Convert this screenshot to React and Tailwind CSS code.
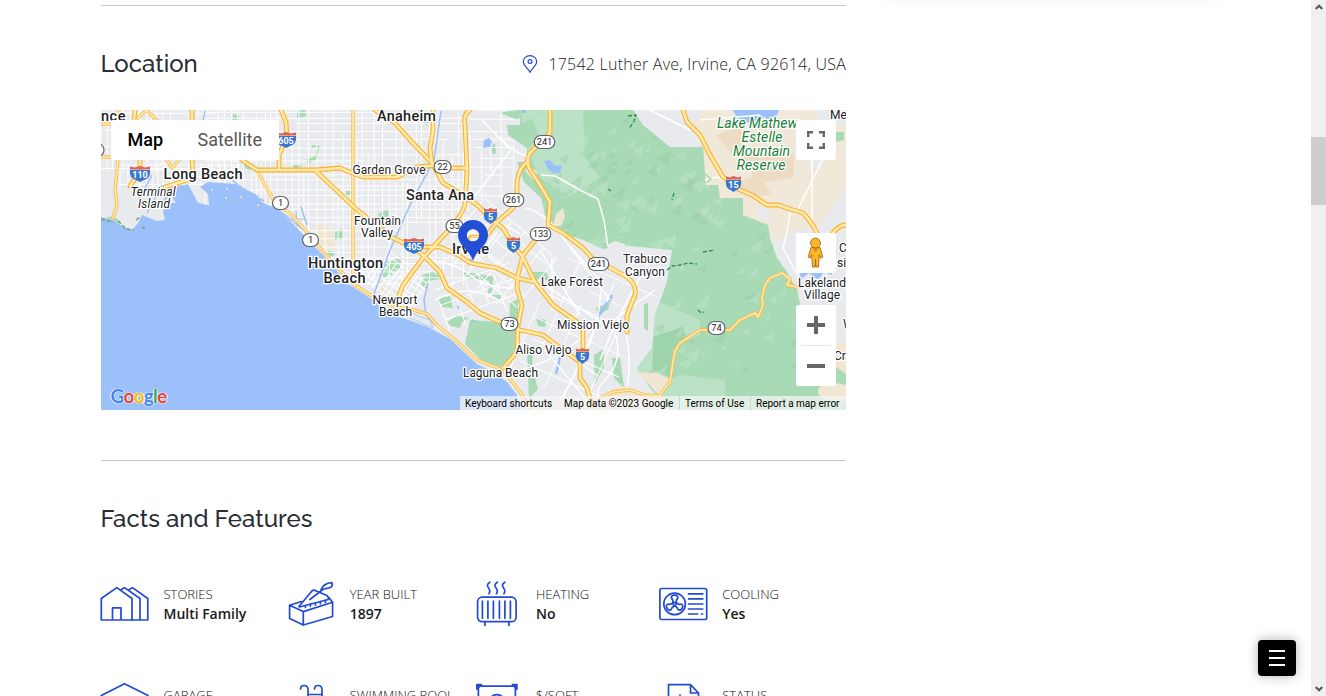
import React from "react";

/* ---------- map data ---------- */
const rng = (seed) => () => {
  seed = (seed * 1664525 + 1013904223) % 4294967296;
  return seed / 4294967296;
};

const LAND =
  "M101 110H846V410H520L517 395 507 382 493 372 477 364 464 352 450 339 430 328 412 321 393 315 370 298 350 285 322 254 298 229 280 210 262 202 257 195 236 184 208 182 200 187 208 194 209 205 198 203 188 184 178 186 167 190 176 203 168 203 163 211 165 220 157 221 142 215 138 223 132 230 123 227 115 221 101 217Z";

const FOREST =
  "M520 110H633L643 125 670 147H703L706 185H718L720 198H743V215L768 225 770 238 777 258 787 272 797 290 810 350 846 368V410H670L650 388 637 368 652 348 655 315 667 282 672 250 620 245 603 249 583 240 563 233 547 222 541 198 524 182 517 162H527V148L508 135 507 125 520 125Z";

const majorRoads = [
  "M375 110L395 123 410 140 432 163 443 183 460 193 477 205 490 218 503 228 513 245 522 256 535 282 553 305 577 322 583 328V352L580 362V378L587 388 593 410",
  "M281 110L286 122 287 137 279 155V170",
  "M242 160L257 170H315L355 208 370 220 393 238 413 247H440L460 256 470 263 497 268 517 278 535 282",
  "M315 170L340 168 352 173 363 177H397L417 167 440 165 453 168H466",
  "M470 110Q463 114 465 125L467 172 465 202Q466 210 447 232L423 258 403 285 398 298",
  "M433 110V132L430 148 432 163",
  "M550 110V133L530 153Q524 163 533 174L540 185 550 202 548 225 563 233 583 248 592 258 600 262 627 277Q637 285 635 295L627 315V332",
  "M526 163Q519 168 517 182V195L513 208 497 222 487 235 473 242",
  "M537 238L523 255 518 275 517 288 522 305 518 325 517 352 503 368",
  "M413 247L423 255 440 272 447 288 467 302 480 313 500 322 520 330 543 335 563 350 580 362",
  "M683 110L687 122 700 135 710 155 723 177 740 190 752 195 767 205H778L787 208 803 213Q811 221 817 233",
  "M833 233Q839 225 846 225",
  "M135 110L133 130 140 155V172L130 186",
  "M192 110V160L193 172 188 180 165 187",
];

const minorRoads = [
  "M257 170L265 185 275 202 292 215 312 238 325 254 352 283 370 295 395 307 410 309 427 314 437 325 455 340 477 360 503 370 520 392 530 408",
  "M660 395L670 382 673 362Q674 350 680 343L700 330H730L740 320 755 313 758 317 763 305 762 298 765 285 770 278 782 273 790 279 787 285 797 287",
  "M600 398L613 392 630 390 645 395 660 396",
  "M353 110V283",
  "M119 110L113 128 118 160 115 190 117 205 113 218",
  "M101 157H145",
  "M147 110L160 124",
  "M167 160L172 168 179 160",
  "M101 124H130 L147 110",
];

const whiteRoads = [
  "M541 175L555 176 580 190 598 199 604 220 608 247 M500 137L511 149 526 156 M466 207L510 151 M490 217L520 234 M478 246L520 285 M497 232L470 268 M525 208Q547 212 567 243L600 280 M482 120L511 150",
  "M424 260Q455 262 470 275T512 288 M435 300Q475 280 505 305 M540 282L604 324 M552 258V310 M535 330L598 376 M560 400Q605 330 600 282 M520 370Q560 360 590 330 M600 360Q620 310 650 260 M600 330L655 290 M614 330Q625 360 605 380T620 408 M625 330Q632 355 627 390",
  "M540 250L580 315 M570 247L610 300 M545 350L585 398 M650 110L690 130 M705 180L718 177 733 187 M700 120L760 115 M790 212L787 232 783 248 800 280 M795 215L825 155 M812 160V220",
];

const creeks = [
  "M441 111L434 160 410 205 390 250 374 294 M205 111L195 160 M152 175L139 199 M162 185L147 213 M179 184L158 207 M232 180L249 193 264 201 M301 207L307 225 M283 213L306 232 M428 283L424 300 426 315 M423 312L435 325",
  "M607 302L600 315 M612 295L609 302 M560 357L556 374",
];

/* Street grids: rectangles of parallel lines, turned about their centre. */
function gridPath(x0, y0, x1, y1, seed, min, max) {
  const r = rng(seed);
  let d = "";
  for (let x = x0; x < x1; x += min + r() * (max - min)) {
    const a = r() < 0.45 ? r() * (y1 - y0) * 0.5 : 0;
    const b = r() < 0.45 ? r() * (y1 - y0) * 0.4 : 0;
    d += `M${x.toFixed(1)} ${(y0 + a).toFixed(1)}V${(y1 - b).toFixed(1)}`;
  }
  for (let y = y0; y < y1; y += min + r() * (max - min)) {
    const a = r() < 0.45 ? r() * (x1 - x0) * 0.5 : 0;
    const b = r() < 0.45 ? r() * (x1 - x0) * 0.4 : 0;
    d += `M${(x0 + a).toFixed(1)} ${y.toFixed(1)}H${(x1 - b).toFixed(1)}`;
  }
  return d;
}

const grids = [
  { d: gridPath(205, 108, 470, 285, 7, 4, 9), t: undefined },
  { d: gridPath(101, 108, 215, 172, 21, 4, 10), t: undefined },
  { d: gridPath(120, 165, 240, 188, 11, 5, 9), t: undefined },
  { d: gridPath(470, 110, 515, 200, 3, 7, 13), t: undefined },
  { d: gridPath(450, 220, 545, 295, 31, 9, 17), t: "rotate(40 497 257)" },
  { d: gridPath(370, 262, 425, 302, 13, 4, 7), t: "rotate(35 398 282)" },
  { d: gridPath(530, 270, 635, 400, 17, 16, 30), t: "rotate(24 582 335)" },
  { d: gridPath(440, 275, 520, 320, 23, 12, 22), t: "rotate(-20 480 297)" },
];

function facets(count, seed) {
  const r = rng(seed);
  let d = "";
  for (let i = 0; i < count; i++) {
    const x = 515 + r() * 300;
    const y = 112 + r() * 265;
    const l = 5 + r() * 11;
    d += `M${x.toFixed(1)} ${y.toFixed(1)}l${l.toFixed(1)} ${(-l * (0.4 + r() * 0.6)).toFixed(1)} ${(-l * 0.25).toFixed(1)} ${(l * (0.8 + r() * 0.3)).toFixed(1)}Z`;
  }
  return d;
}
const lightFacets = facets(120, 5);
const darkFacets = facets(80, 99);

const parks =
  "M297 112l8-3 1 7-9 3Z M233 114l6 1v5h-7Z M306 160l9-4 2-9-6 1 1-3 8 1-3 13-9 5Z M294 165l8 0-3 4-8 0Z M346 191h5v4h-5Z M335 231l8-2v10l-8 1Z M329 250l6 4-3 3-5-3Z M378 214l10-5 1 8-10 1Z M428 145l4-2v10l-4 1Z M491 146l4-3 1 10-4 1Z M422 120l9-5 2 5-7 6Z M382 263l20-5-2 10-9 7-8 3Z M423 275l13-5 4 9-11 2-3 8-5-5Z M437 299l13-3 3 12-10-1Z M447 322l10-6 12 2-7 4-2 6-9-2Z M463 272l17 2 13 3-1 15-4 2 1-13-22-3Z M491 295l12 0-4 7Z M510 303l8-4v35l-9-4Z M531 272l15 0 4 10-9-4-6 5Z M536 318l10 2-1 7-7-1Z M527 352l6-1-1 16 6 22-9 10Z M596 308l14-6-2 8-10 4Z M470 320L497 322 517 332V352L500 367 483 362 465 344Z M594 355l10-6v18l-9 17Z M612 358l8 0 4 30-10-10Z M644 304l4-1v28l-4-3Z M500 113l28-6-2 9-10 3-6-2Z M101 219l12-3 8 6-5 3Z M243 163l8 2 2 6-8-3Z";

const waters =
  "M544 161l6-1 4 5 8 1-2 7-11-2Z M484 140l5-2 3 4-2 5-7 1Z M521 109h6l-2 4-4 0Z M733 110h46l-5 13-10-6-12 7-14-4Z M748 192l7 1-1 4-6-2Z M799 268h33v7l-8-3-6 8-9-7-8 6Z M457 305l3 2-2 3Z M471 258l2 4-6 1Z M589 277l3-2 1 3-4 2Z M472 319l4 2-4 1Z M597 313l5-4-3 10Z";

/* ---------- map pieces ---------- */
function T({ x, y, w, s = 12, big, children, anchor = "middle", green, italic }) {
  return (
    <text
      x={x}
      y={y}
      textAnchor={anchor}
      fontFamily="Roboto, 'Liberation Sans', sans-serif"
      fontSize={big ? 14.5 : s}
      fontWeight={big ? 500 : 400}
      fontStyle={italic ? "italic" : "normal"}
      fill={green ? "#188038" : "#202124"}
      stroke="#ffffff"
      strokeWidth="2.6"
      strokeLinejoin="round"
      paintOrder="stroke"
      textLength={w}
    >
      {children}
    </text>
  );
}

function Route({ x, y, n }) {
  const w = n.length === 1 ? 16 : n.length === 2 ? 17 : 20.5;
  return (
    <g>
      <rect x={x - w / 2} y={y - 6.5} width={w} height="13" rx="6.5" fill="#fff" stroke="#5f6368" strokeWidth="1.2" />
      <text x={x} y={y + 3.3} textAnchor="middle" fontSize="9.3" fontFamily="Roboto, sans-serif" fill="#202124">
        {n}
      </text>
    </g>
  );
}

function Interstate({ x, y, n }) {
  const w = n.length === 1 ? 6.5 : n.length === 2 ? 7.5 : 10;
  return (
    <g transform={`translate(${x} ${y})`}>
      <path d={`M${-w} -4H${w}Q${w + 1} 4 ${w * 0.4} 6L0 8 ${-w * 0.4} 6Q${-w - 1} 4 ${-w} -4Z`} fill="#3b78cc" />
      <path d={`M${-w} -7.5L${-w * 0.5} -6.5 0 -8 ${w * 0.5} -6.5 ${w} -7.5V-4.6H${-w}Z`} fill="#dd6258" />
      <text x="0" y="4.2" textAnchor="middle" fontSize="9" fontWeight="700" fontFamily="Roboto, sans-serif" fill="#fff">
        {n}
      </text>
    </g>
  );
}

function MapArt() {
  return (
    <svg viewBox="101 110 745 300" width="745" height="300" className="block">
      <defs>
        <clipPath id="land"><path d={LAND} /></clipPath>
        <clipPath id="forest"><path d={FOREST} /></clipPath>
      </defs>
      <rect x="101" y="110" width="745" height="300" fill="#9cc0fa" />
      <path d={LAND} fill="#e8eaed" />
      <g clipPath="url(#land)">
        <path d="M703 110H846V260L800 250 770 238 743 215 718 198 704 185 702 147 690 130Z" fill="#f0e8d8" />
        <path d="M650 110H683L700 140 704 150H670L643 127 634 110Z" fill="#e8eaed" />
        <path d="M716 135l18-8 12 3-6 19 20 5 6-4 28 4v23l-30 5 8 13-20 2-16-14 16-6 0-15-20-8Z" fill="#eddcc3" />
        <path d="M815 110h31v14l-10 3v20l-22 12Z M757 205l12 4 1 15-13-7Z M780 240l18-10 20-2 28-40v90h-50Z M810 160h12v8h-12Z" fill="#e8eaed" />
        <path d="M313 225l12 0 8 9 2 10-7 7-8-9Z M378 280h9v14l-6-2Z M260 196l14 3 0 9-13-6Z" fill="#f0e6d2" />
        <path d={parks} fill="#a8dab5" />
        <g fill="none" stroke="#fff" strokeWidth=".95">
          {grids.map((g, i) => (
            <path key={i} d={g.d} transform={g.t} />
          ))}
        </g>
        <path d={FOREST} fill="#a8dab5" />
        <g clipPath="url(#forest)">
          <path d="M520 110H583L585 158 600 178 570 196 540 178 528 150Z M655 300L700 320V335L680 343 668 380 680 375 725 380V410H665L650 385 637 367 650 348Z" fill="#bbe2c6" />
          <path d="M654 336l29-8 4 8-14 14-1 28-20-9Z" fill="#9dd4ac" />
          <path d="M520 125l-12 0 1 10 19 13 12-10-8-20Z" fill="#a8dab5" />
          <path d={darkFacets} fill="#9bcbaa" opacity=".42" />
          <path d={lightFacets} fill="#c1e6ca" opacity=".5" />
        </g>
        <path d="M637 372l20 1 12 6-9 17-15-2-15-8-18 2-12 12v10h46l18-10Z" fill="#f0e6d2" />
        <path d="M832 344h14v30l-14-10Z M818 390q3-9 18-7l10 2v16q-28 2-28-11Z M556 214l7-6 2 9-4 9-8 0Z M528 166l10 6-5 8-8-9Z" fill="#f0e6d2" />
        <path d="M607 245l8-4 10 3-2 12-10 5Z" fill="#e8eaed" />
        <path d={waters} fill="#9cc0fa" />
        <path d="M836 132h8v8l-8 2Z" fill="#a8dab5" />
        <g fill="none" stroke="#9cc0fa" strokeWidth="1.5">
          <path d={creeks[0]} />
          <path d={creeks[1]} strokeWidth="2.5" />
          <path d="M283 208l20 18 M296 211l1 15 M289 219h16" strokeWidth="1.2" />
        </g>
        <g fill="none" stroke="#fff" strokeWidth="1.5" strokeLinejoin="round">
          {whiteRoads.map((d, i) => (
            <path key={i} d={d} />
          ))}
        </g>
        <path d="M628 116l8-1-2 6-5 8M608 189l3 2M674 193l-2 7M667 270l5-4 9-1 7-2 9 1M698 310l3 3 3-1M703 252l12-2" fill="none" stroke="#2e8b57" strokeWidth="1.3" strokeDasharray="4 2" />
        <path d="M705 174l6 5-4 3" fill="none" stroke="#a8dab5" strokeWidth="1.6" />
        <g fill="none" strokeLinejoin="round" strokeLinecap="round">
          {minorRoads.map((d, i) => (
            <path key={i} d={d} stroke="#f8bd4c" strokeWidth="3.4" />
          ))}
          {minorRoads.map((d, i) => (
            <path key={i} d={d} stroke="#ffe9ac" strokeWidth="1.7" />
          ))}
          {majorRoads.map((d, i) => (
            <path key={i} d={d} stroke="#f9b22c" strokeWidth="4.8" />
          ))}
          {majorRoads.map((d, i) => (
            <path key={i} d={d} stroke="#ffe9ac" strokeWidth="2.6" />
          ))}
        </g>
      </g>
      <path d="M403 308l15 8 12 4 3 8-14-6-16-8Z" fill="#e8eaed" stroke="#9cc0fa" strokeWidth=".8" />
      <path d="M101 219l12 3M118 221l8 8 8 1M136 220l4-3M142 227l3 2" stroke="#5eaa72" strokeWidth="1.5" strokeDasharray="4 2" fill="none" />
      <path d="M211 190h2M226 189h2M225 198h2M240 197h2M257 205h2" stroke="#e3ddc7" strokeWidth="2" />

      <g transform="translate(.5 0)">
        <Route x={544} y={142} n="241" />
        <Route x={442} y={167} n="22" />
        <Route x={513} y={200} n="261" />
        <Route x={454} y={226} n="55" />
        <Route x={540} y={234} n="133" />
        <Route x={598} y={264} n="241" />
        <Route x={509} y={324} n="73" />
        <Route x={716} y={328} n="74" />
        <Route x={280} y={203} n="1" />
        <Route x={310} y={240} n="1" />
        <rect x="87.500" y="143.500" width="16" height="13" rx="6.500" fill="#fff" stroke="#5f6368" strokeWidth="1.2" />
        <Interstate x={139.500} y={174} n="110" />
        <Interstate x={285.500} y={140} n="605" />
        <Interstate x={413.500} y={246} n="405" />
        <Interstate x={490} y={216} n="5" />
        <Interstate x={513} y={245} n="5" />
        <Interstate x={582} y={356} n="5" />
        <Interstate x={733} y={184} n="15" />

        <T x={100.500} y={121} w={24.500} big anchor="start">nce</T>
        <T x={406} y={121.200} w={59} big>Anaheim</T>
        <T x={202.500} y={179.200} w={79} big>Long Beach</T>
        <T x={439.500} y={200.200} w={68} big>Santa Ana</T>
        <T x={345} y={268.200} w={75} big>Huntington</T>
        <T x={344} y={283.200} w={42} big>Beach</T>
        <T x={470} y={254.200} w={37} big>Irvine</T>
        <T x={388.500} y={174.300} w={73}>Garden Grove</T>
        <T x={377} y={225.300} w={47}>Fountain</T>
        <T x={376.500} y={237.300} w={32}>Valley</T>
        <T x={394.500} y={304.300} w={45}>Newport</T>
        <T x={395} y={316.300} w={33}>Beach</T>
        <T x={571.500} y={286.300} w={62}>Lake Forest</T>
        <T x={592.500} y={329.300} w={72}>Mission Viejo</T>
        <T x={543} y={354.300} w={56}>Aliso Viejo</T>
        <T x={500} y={377.300} w={75}>Laguna Beach</T>
        <T x={644.500} y={263.300} w={44}>Trabuco</T>
        <T x={644.500} y={276.300} w={40}>Canyon</T>
        <T x={821.500} y={287.300} w={48}>Lakeland</T>
        <T x={821.500} y={299.300} w={36}>Village</T>
        <T x={152.500} y={196.300} w={45} italic>Terminal</T>
        <T x={153.500} y={208.300} w={32} italic>Island</T>
        <T x={716.500} y={128.300} s={14} italic green anchor="start">Lake Mathew</T>
        <T x={761.500} y={142.300} w={41} s={14} italic green>Estelle</T>
        <T x={761} y={156.300} w={57} s={14} italic green>Mountain</T>
        <T x={760.500} y={170.300} w={49} s={14} italic green>Reserve</T>
        <T x={829.500} y={119.300} anchor="start">Me</T>
        <T x={838.500} y={252.300} anchor="start">C</T>
        <T x={836.500} y={267.300} anchor="start">si</T>
        <T x={842.500} y={328.300} anchor="start">W</T>
        <T x={833.500} y={360.300} anchor="start">Cr</T>
      </g>

      <path d="M473 261C470 250 458 246 458 235a15 15 0 0 1 30 0C488 246 476 250 473 261Z" fill="#234fd6" />
      <circle cx="473" cy="235.200" r="6.300" fill="#f4f5f6" />
      <path d="M468.500 240Q469.500 236 473 236.300L479 236" stroke="#f9b22c" strokeWidth="3" fill="none" />
      <path d="M469.500 240.500Q470.500 236.500 473 236.600L479 236.200" stroke="#ffe9ac" strokeWidth="1.2" fill="none" />
      <circle cx="473" cy="235.200" r="7.300" fill="none" stroke="#234fd6" strokeWidth="2" />
    </svg>
  );
}

function GoogleMark() {
  const letters = [
    ["G", "text-[#4285f4]"],
    ["o", "text-[#ea4335]"],
    ["o", "text-[#fbbc05]"],
    ["g", "text-[#4285f4]"],
    ["l", "text-[#34a853]"],
    ["e", "text-[#ea4335]"],
  ];
  return (
    <div className="absolute left-[9.5px] bottom-[3px] flex font-[Lato,sans-serif] text-[19px] leading-[22px] font-bold tracking-[-0.8px] [text-shadow:0_0_1px_#fff,0_0_2px_#fff,1px_0_0_#ffffff99,-1px_0_0_#ffffff99]">
      {letters.map(([c, k], i) => (
        <span key={i} className={k}>{c}</span>
      ))}
    </div>
  );
}

function MapView() {
  return (
    <div className="relative h-[300px] w-[745px] overflow-hidden font-[Roboto,sans-serif]">
      <MapArt />
      <div className="absolute left-[10px] top-[10px] flex h-10 w-[168px] items-center rounded-xs bg-white text-lg">
        <span className="w-[69px] pl-[16.5px] font-medium text-black">Map</span>
        <span className="pl-[17.5px] text-[#565656]">Satellite</span>
      </div>
      <div className="absolute right-[10px] top-[10px] flex size-10 items-center justify-center rounded-xs bg-white">
        <svg width="18" height="18" viewBox="0 0 18 18" fill="none" stroke="#666" strokeWidth="2.4">
          <path d="M1.200 6V1.200H6M12 1.200h4.800V6M16.800 12v4.800H12M6 16.800H1.200V12" />
        </svg>
      </div>
      <div className="absolute right-[10px] top-[123px] flex size-10 items-center justify-center rounded-xs bg-white">
        <svg width="20" height="32" viewBox="0 0 20 32" stroke="#a36a12" strokeWidth=".9" fill="#fbb829">
          <path d="M5 10.500h9l2.800 9.500-2 1.200-1.500-3.500-.8 12.300H9.900L9.500 22l-.4 8H6.500l-.8-12.300L4.200 21.200l-2-1.200Z" />
          <path d="M6.500 11h6l-3 4.500Z" fill="#e8851c" stroke="none" />
          <circle cx="9.500" cy="6" r="4.900" />
        </svg>
      </div>
      <div className="absolute right-[10px] top-[195px] flex h-[81px] w-10 flex-col items-center rounded-xs bg-white">
        <div className="flex h-10 items-center">
          <svg width="18" height="18" viewBox="0 0 18 18" fill="#666"><path d="M7 0h4v7h7v4h-7v7H7v-7H0V7h7Z" /></svg>
        </div>
        <div className="h-px w-[30px] bg-[#e6e6e6]" />
        <div className="flex h-10 items-center">
          <div className="h-1 w-[18px] bg-[#666]" />
        </div>
      </div>
      <GoogleMark />
      <div className="absolute bottom-0 right-0 flex h-[14px] w-[386px] bg-[#f5f5f5b8] text-[10px] leading-[15px] whitespace-nowrap text-black">
        <span className="w-[98px] border-r border-[#e0e6ee66] pl-[5px] tracking-[0.02px]">Keyboard shortcuts</span>
        <span className="w-[122px] border-r border-[#c5d8cb] pl-[6px] tracking-[0.02px]">Map data ©2023 Google</span>
        <span className="w-[71px] border-r border-[#c5d8cb] pl-[5px]">Terms of Use</span>
        <span className="pl-[5px]">Report a map error</span>
      </div>
    </div>
  );
}

/* ---------- fact icons ---------- */
function Icon({ children }) {
  return (
    <svg width="48" height="48" viewBox="0 0 48 48" fill="none" stroke="#234ad3" strokeWidth="1.7" strokeLinejoin="round" strokeLinecap="round" className="shrink-0 overflow-visible">
      {children}
    </svg>
  );
}

const icons = {
  stories: (
    <g transform="translate(-.5 0)">
      <path d="M.800 18.500L16.300 7.600 31.500 18.500V40H.800ZM12 40V27.800h8.500V40" />
      <path d="M20.500 9.800L24 7.600l15.500 10.900V40H31.500M28.500 9.800L32 7.600l15.300 10.900V40h-8" />
    </g>
  ),
  built: (
    <g transform="translate(.4 0)">
      <path d="M2.200 25.200L14 21.500M2.200 25.200l13.700 6.400 29.300-9.400-3.500-4.500M2.200 25.200V38.500l13.700 6.500V31.600M15.900 45l29.300-8.500V22.200" />
      <path d="M11.500 26.500L24.500 11q1.800-1.600 4.500 0L39.500 15.500q2 1.500 1.500 4L12 27Z" fill="#fff" />
      <path d="M22.500 19.500L35.500 9.500M33.500 10Q36 3.200 44.500 2.700 46.500 8 38 8.700L33.500 10" />
      <path d="M18 25.500v2M23 24.200v2M28 23v2M33 21.700v2M38 20v2.500" />
    </g>
  ),
  heat: (
    <g transform="translate(.9 -.6)">
      <rect x="2.700" y="17.800" width="38.500" height="24.500" rx="4.500" />
      <path d="M7.500 21.800v17M13 21.800v17M18.500 21.800v17M24.500 21.800v17M30 21.800v17M35.500 21.800v17M10 42.500v3.500M34 42.500v3.500" />
      <path d="M15 2.800q-4 2.500-1.500 5.500t.5 6M22.500 2.800q-4 2.500-1.500 5.500t.5 6M30 2.800q-4 2.500-1.500 5.500t.5 6" />
    </g>
  ),
  cool: (
    <g transform="translate(-.9 -.3)">
      <rect x=".800" y="8.800" width="46.800" height="31" rx="1.800" />
      <circle cx="15.500" cy="24.200" r="10.800" />
      {[0, 120, 240].map((a) => (
        <path key={a} transform={`rotate(${a} 15.500 24.200)`} d="M13.800 23Q14.300 20 12.300 18.500 12 15.500 15.500 15.500t3.200 3Q16.700 20 17.200 23" />
      ))}
      <circle cx="15.500" cy="24.200" r="1.500" />
      <path d="M29.500 14.200h14.200M29.500 19.200h14.200M29.500 24.300h14.200M29.500 29.300h14.200M29.500 34.300h9M42.500 34.300h1" />
    </g>
  ),
  garage: <path d="M.300 14.500L23.500 2.800 47 14.500V45H.300Z" />,
  pool: <path d="M13.500 8Q13.500 4.500 17.200 4.500T21 8.500V45M27.500 8Q27.500 4.500 31.200 4.500T35 8.500V45M21 13.500h14" />,
  area: (
    <g transform="translate(.9 .6)">
      <path d="M3.500 4.500H40.500V46H3.500Z" />
      <path d="M2 3h4.500L2 7.500ZM42 3h-4.500L42 7.500Z" fill="#234ad3" />
      <path d="M14 21a8 8 0 1 1 16 0" />
    </g>
  ),
  status: <path d="M8.500 45V3.600h22L38.500 12V45M30.500 3.600V12h8M20 16v-2" />,
};

const facts = [
  ["stories", "STORIES", "Multi Family"],
  ["built", "YEAR BUILT", "1897"],
  ["heat", "HEATING", "No"],
  ["cool", "COOLING", "Yes"],
  ["garage", "GARAGE"],
  ["pool", "SWIMMING POOL"],
  ["area", "$/SQFT"],
  ["status", "STATUS"],
];

function Fact({ icon, label, value }) {
  return (
    <div className="flex h-[48px] gap-[14.5px]">
      <Icon>{icons[icon]}</Icon>
      <div className="pt-[4px] whitespace-nowrap">
        <div className="text-[13px] leading-5 font-light text-[#111]">{label}</div>
        {value && <div className="text-[14px] leading-5 font-semibold tracking-[-0.02px] text-[#1a1a1a]">{value}</div>}
      </div>
    </div>
  );
}

/* ---------- page ---------- */
export default function App() {
  return (
    <div className="flex h-[696px] w-[1326px] overflow-hidden bg-white font-['Open_Sans','Noto_Sans',sans-serif]">
      <main className="ml-[101px] w-[745px] shrink-0 pt-[5px]">
        <div className="h-px bg-[#c9c9c9]" />
        <div className="flex h-[104px] items-center justify-between pt-[12px]">
          <h2 className="-ml-[0.5px] font-[Raleway,Lato,sans-serif] text-[24px] leading-8 font-medium text-[#2a2d35]">Location</h2>
          <div className="flex items-center">
            <svg width="16" height="18" viewBox="0 0 16 18" fill="none" stroke="#234ad3" strokeWidth="1.200">
              <path d="M8 17.300C6 13 1.300 10.500 1.300 6.800a6.700 6.200 0 0 1 13.400 0C14.700 10.500 10 13 8 17.300Z" />
              <circle cx="8" cy="6.500" r="1.900" />
            </svg>
            <span className="ml-[10px] text-[16px] leading-6 font-light tracking-[0.23px] text-[#222]">17542 Luther Ave, Irvine, CA 92614, USA</span>
          </div>
        </div>
        <MapView />
        <div className="mt-[50px] h-px bg-[#c9c9c9]" />
        <h2 className="-ml-[0.5px] mt-[42px] font-[Raleway,Lato,sans-serif] text-[24px] leading-8 font-medium text-[#2a2d35]">Facts and Features</h2>
        <div className="mt-[45px] grid grid-cols-4 gap-y-[53px]">
          {facts.map(([icon, label, value]) => (
            <Fact key={label} icon={icon} label={label} value={value} />
          ))}
        </div>
      </main>
      <aside className="ml-[40px] w-[330px] shrink-0">
        <div className="-mt-5 h-[15px] rounded-lg bg-white shadow-[0_0_20px_rgba(0,0,0,0.1)]" />
      </aside>
      <div className="flex flex-1 items-end justify-end pr-[15px] pb-5">
        <button className="flex h-9 w-[38px] flex-col items-center justify-center gap-[5px] rounded bg-black shadow-[0_0_12px_rgba(0,0,0,0.3)]">
          <span className="h-[2px] w-4 bg-white" />
          <span className="h-[2px] w-4 bg-white" />
          <span className="h-[2px] w-4 bg-white" />
        </button>
      </div>
      <div className="flex w-[15px] shrink-0 flex-col items-center bg-[#f0f0f0]">
        <svg width="8" height="6" viewBox="0 0 8 6" className="mt-1 shrink-0" fill="none" stroke="#555" strokeWidth="2"><path d="M.700 5L4 1.700 7.300 5" /></svg>
        <div className="mt-[127px] h-[68px] w-full shrink-0 bg-[#cdcdcd]" />
        <svg width="8" height="6" viewBox="0 0 8 6" className="mt-auto mb-1 shrink-0" fill="none" stroke="#555" strokeWidth="2"><path d="M.700 1L4 4.300 7.300 1" /></svg>
      </div>
    </div>
  );
}
